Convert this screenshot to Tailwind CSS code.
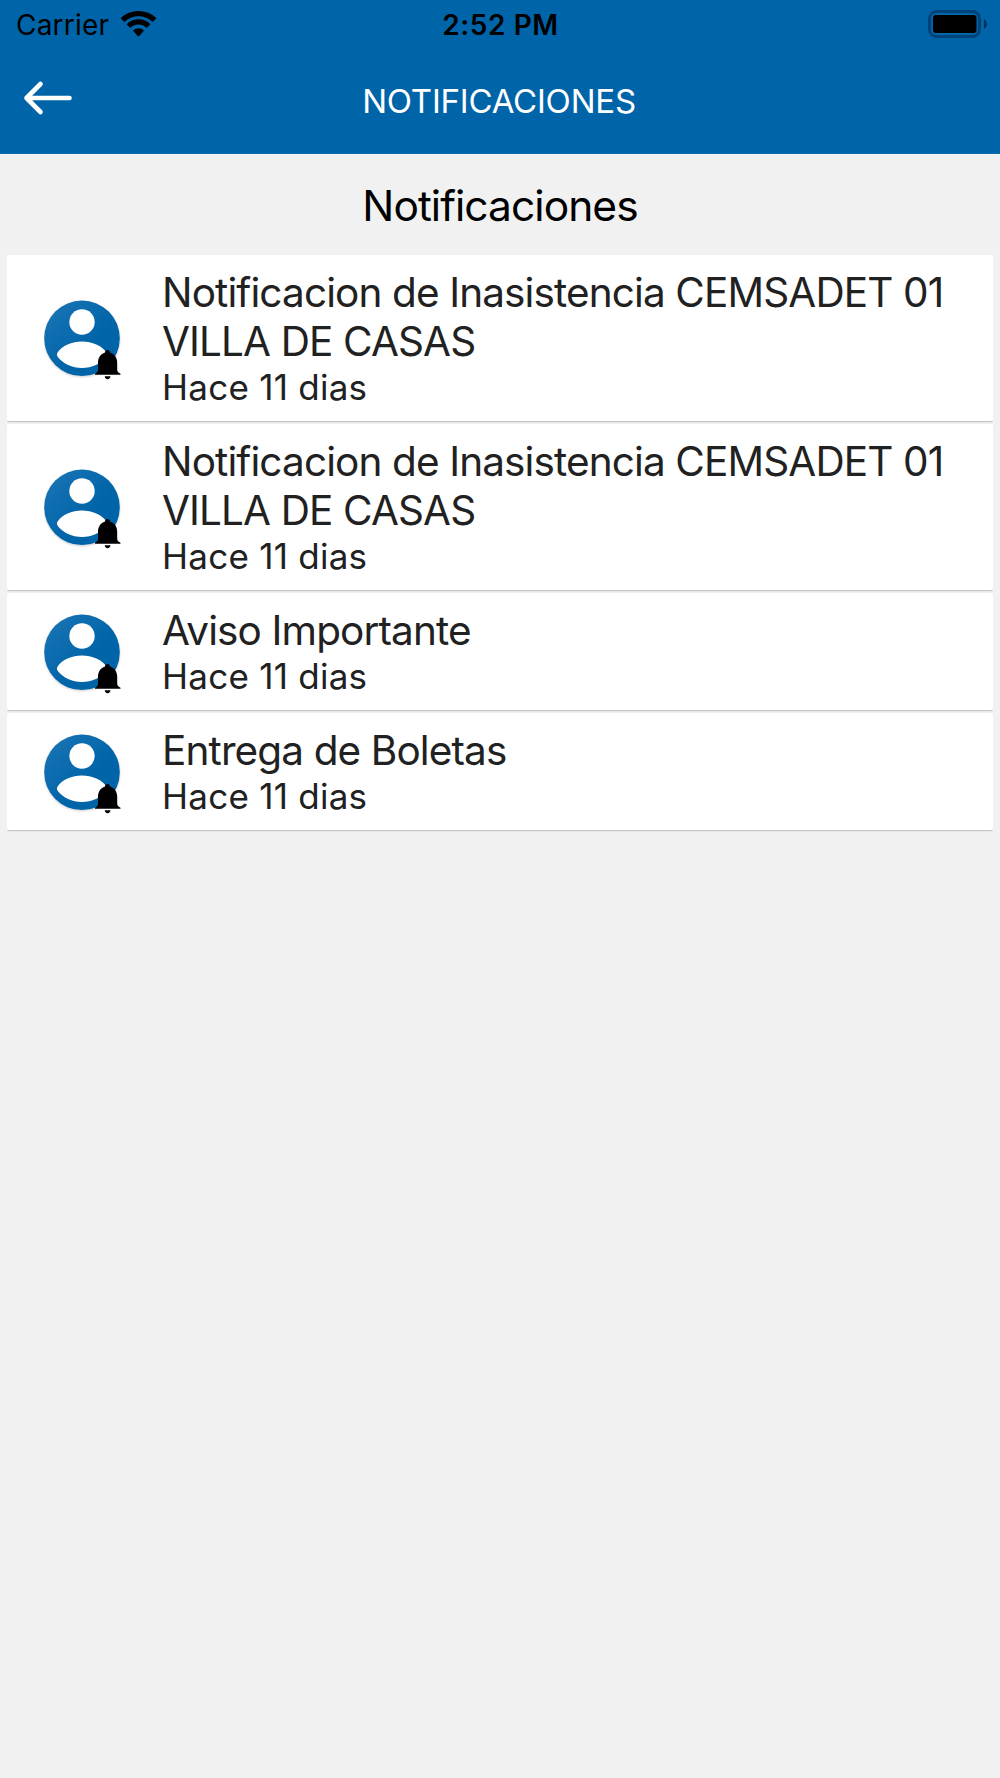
<!DOCTYPE html>
<html lang="es">
<head>
    <meta charset="UTF-8">
    <meta name="viewport" content="width=device-width, initial-scale=1.0">
    <title>Notificaciones</title>
    <script src="https://cdn.jsdelivr.net/npm/@tailwindcss/browser@4"></script>
</head>
<body class="min-h-screen bg-[#f1f1f1] font-['Inter','Liberation_Sans',sans-serif] text-[#212121]">
    <header class="h-[154px] bg-[#0064a8] border-b border-[#0b6db0]">
        <!-- Status bar -->
        <div class="grid grid-cols-3 h-[50px] pl-4 pr-[13px] text-black leading-[50px]">
            <div class="flex">
                <span class="text-[28px] tracking-[0.2px]">Carrier</span>
                <svg class="ml-[11px] mt-[10px] w-[37px] h-[27px]" viewBox="0 0 37 27">
                    <path d="M0.6 8.2 A25.6 25.6 0 0 1 36.4 8.2 L32.6 12 A20.2 20.2 0 0 0 4.4 12 Z"/>
                    <path d="M6.6 14.2 A16.8 16.8 0 0 1 30.4 14.2 L26.7 17.9 A11.6 11.6 0 0 0 10.3 17.9 Z"/>
                    <path d="M13 20.5 A8 8 0 0 1 24 20.5 L19.3 25.9 Q18.5 26.8 17.7 25.9 Z"/>
                </svg>
            </div>
            <div class="pr-[2px] text-center font-semibold text-[28px] tracking-[0.6px]">2:52 PM</div>
            <svg class="justify-self-end mt-[10px] w-[59px] h-7" viewBox="0 0 59 28">
                <rect x="1.5" y="1.5" width="50" height="25" rx="7" fill="none" stroke="#00427a" stroke-width="3"/>
                <rect x="5" y="5" width="43.5" height="18" rx="3"/>
                <path d="M56 9 Q59 11 59 14 T56 19 Z" fill="#00305c"/>
            </svg>
        </div>
        <!-- Navigation bar -->
        <div class="grid grid-cols-3 h-[103px] px-[22px] text-white">
            <svg class="mt-[29px] w-[52px] h-[38px]" viewBox="0 0 52 38" fill="none" stroke="currentColor" stroke-width="4.6" stroke-linecap="round" stroke-linejoin="round">
                <path d="M47.5 19H4.5M18.5 5L4.5 19L18.5 33"/>
            </svg>
            <div class="mt-[31px] pr-[2px] text-center text-[33px] leading-10 tracking-[-0.22px] whitespace-nowrap">NOTIFICACIONES</div>
        </div>
    </header>

    <main class="px-[7px]">
        <h1 class="h-[101px] pt-[26px] text-center text-[42.5px] leading-[52px] tracking-[-0.95px] text-black">Notificaciones</h1>
        <ul id="list" class="flex flex-col gap-[2px]"></ul>
    </main>

    <template id="row">
        <li class="flex items-center py-[13px] pl-[37px] bg-white border-b border-[#c4c5c9] rounded-[2px] shadow-[0_1px_1px_rgba(0,0,0,0.04)]">
            <svg class="shrink-0 w-20 h-[84px] mr-[38px]" viewBox="0 0 80 84">
                <defs>
                    <linearGradient id="blue" x1="0" y1="0" x2="1" y2="1">
                        <stop offset="0" stop-color="#1c76b6"/>
                        <stop offset="0.6" stop-color="#0064a8"/>
                        <stop offset="1" stop-color="#0064a8"/>
                    </linearGradient>
                </defs>
                <circle cx="38" cy="42.3" r="37.8" fill="url(#blue)" class="drop-shadow-[0_1px_1px_rgba(0,0,0,0.2)]"/>
                <circle cx="38" cy="26" r="12.7" fill="#fff"/>
                <path d="M13.3 57 C18 49.5 28 45.5 38 45.5 C48 45.5 58 49.5 62.7 57 C63.4 58.5 63 60 62 61.2 C57 67.5 48 72 38 72 C28 72 19 67.5 14 61.2 C13 60 12.6 58.5 13.3 57 Z" fill="#fff"/>
                <path d="M63.5 54 C65 54 66 55 66 56.6 C70.5 58 73.2 62 73.2 67 V73.5 C73.2 75.5 74 76.5 76.5 77.8 V78.8 H51 V77.8 C53.3 76.5 54 75.5 54 73.5 V67 C54 62 56.6 58 61 56.6 C61 55 62 54 63.5 54 Z"/>
                <path d="M60.7 80.3 H66.5 C66.3 82 65.3 83.2 63.6 83.2 C61.9 83.2 60.9 82 60.7 80.3 Z"/>
            </svg>
            <div>
                <p class="title w-[800px] text-[40.5px] leading-[49px] tracking-[-0.88px]"></p>
                <p class="date text-[35px] leading-[42px] tracking-[0.25px]"></p>
            </div>
        </li>
    </template>

    <script>
    const notifications = [
        { title: 'Notificacion de Inasistencia CEMSADET 01 VILLA DE CASAS', date: 'Hace 11 dias' },
        { title: 'Notificacion de Inasistencia CEMSADET 01 VILLA DE CASAS', date: 'Hace 11 dias' },
        { title: 'Aviso Importante', date: 'Hace 11 dias' },
        { title: 'Entrega de Boletas', date: 'Hace 11 dias' },
    ];

    const list = document.getElementById('list');
    const template = document.getElementById('row');
    notifications.forEach((item) => {
        const row = template.content.cloneNode(true);
        row.querySelector('.title').textContent = item.title;
        row.querySelector('.date').textContent = item.date;
        list.appendChild(row);
    });
    </script>
</body>
</html>
